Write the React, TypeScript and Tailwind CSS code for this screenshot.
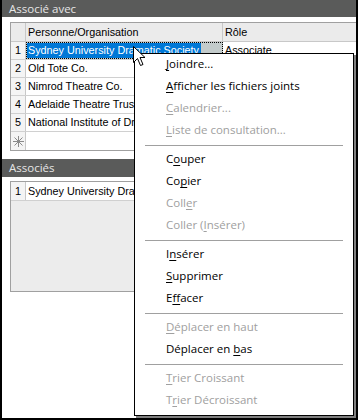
import React from 'react';

type MenuEntry =
  | { sep: true }
  | { sep?: false; pre: string; key: string; post: string; disabled?: boolean };

const menu: MenuEntry[] = [
  { pre: '', key: 'J', post: 'oindre...' },
  { pre: '', key: 'A', post: 'fficher les fichiers joints' },
  { pre: '', key: 'C', post: 'alendrier...', disabled: true },
  { pre: '', key: 'L', post: 'iste de consultation...', disabled: true },
  { sep: true },
  { pre: 'C', key: 'o', post: 'uper' },
  { pre: 'Co', key: 'p', post: 'ier' },
  { pre: 'Coll', key: 'e', post: 'r', disabled: true },
  { pre: 'Coller (', key: 'I', post: 'nsérer)', disabled: true },
  { sep: true },
  { pre: 'I', key: 'n', post: 'sérer' },
  { pre: '', key: 'S', post: 'upprimer' },
  { pre: 'E', key: 'f', post: 'facer' },
  { sep: true },
  { pre: '', key: 'D', post: 'éplacer en haut', disabled: true },
  { pre: 'Déplacer en ', key: 'b', post: 'as' },
  { sep: true },
  { pre: '', key: 'T', post: 'rier Croissant', disabled: true },
  { pre: 'T', key: 'r', post: 'ier Décroissant', disabled: true },
];

const rows = [
  { n: '1', name: 'Sydney University Dramatic Society', role: 'Associate' },
  { n: '2', name: 'Old Tote Co.', role: '' },
  { n: '3', name: 'Nimrod Theatre Co.', role: '' },
  { n: '4', name: 'Adelaide Theatre Trust', role: '' },
  { n: '5', name: 'National Institute of Dramatic Art', role: '' },
];

const grid = "font-['Liberation_Sans',Arial,sans-serif] text-[10.8px] text-black";

function Star() {
  return (
    <svg width="11" height="11" viewBox="0 0 11 11" stroke="#8a8a8a" strokeWidth="1">
      <line x1="5.5" y1="0" x2="5.5" y2="11" />
      <line x1="0" y1="5.5" x2="11" y2="5.5" />
      <line x1="1.5" y1="1.5" x2="9.5" y2="9.5" />
      <line x1="9.5" y1="1.5" x2="1.5" y2="9.5" />
    </svg>
  );
}

function Cursor() {
  return (
    <svg width="13" height="21" viewBox="0 0 13 21" className="absolute left-[131px] top-[46px]">
      <path d="M0.5 0.5 L0.5 16.5 L4.5 12.5 L7.5 19.5 L10 18.5 L7 11.5 L12 11.5 Z" fill="white" stroke="black" strokeWidth="1" />
    </svg>
  );
}

function Bar({ label, tall }: { label: string; tall?: boolean }) {
  return (
    <div className={`${tall ? 'h-[18px]' : 'h-[17px]'} bg-[#5a5b5a] text-[#e6e6e6] pl-[7px] flex items-center font-['Open_Sans',sans-serif] text-[11.5px] leading-none`}>
      {label}
    </div>
  );
}

export default function App() {
  return (
    <div className="relative w-[358px] h-[420px] bg-white border-x-2 border-b-2 border-black overflow-hidden">
      <Bar label="Associé avec" />

      <div className={`mt-[5px] ml-[8px] border-l border-t border-b border-[#a0a0a0] ${grid}`}>
        <div className="flex h-[19px] bg-[#ebebeb] border-b border-[#c8c8c8]">
          <div className="w-[15px] border-r border-[#c8c8c8]" />
          <div className="w-[197px] border-r border-[#c8c8c8] pl-[2px] pt-[1px] flex items-center">Personne/Organisation</div>
          <div className="flex-1 pl-[2px] pt-[1px] flex items-center">Rôle</div>
        </div>
        {rows.map((r, i) => (
          <div key={r.n} className="flex h-[18px] border-b border-[#d0d0d0]">
            <div className="w-[15px] border-r border-[#c8c8c8] bg-[#f4f4f4] flex items-center justify-center">{r.n}</div>
            {i === 0 ? (
              <div className="w-[197px] bg-[#c3cbcb] border border-dotted border-black flex items-center">
                <span className="bg-[#0078d7] text-white h-full flex items-center pl-[1px] pr-[2px] whitespace-nowrap">{r.name}</span>
              </div>
            ) : (
              <div className="w-[197px] border-r border-[#c8c8c8] pl-[2px] flex items-center whitespace-nowrap overflow-hidden">{r.name}</div>
            )}
            <div className="flex-1 pl-[2px] flex items-center">{r.role}</div>
          </div>
        ))}
        <div className="flex h-[18px]">
          <div className="w-[15px] border-r border-[#c8c8c8] bg-[#f4f4f4] flex items-center justify-center"><Star /></div>
          <div className="flex-1" />
        </div>
      </div>

      <div className="h-[8px]" />
      <Bar label="Associés" tall />

      <div className={`mt-[4px] ml-[8px] h-[111px] border-l border-t border-b border-[#a0a0a0] bg-[#ececec] ${grid}`}>
        <div className="flex h-[19px] bg-white border-b border-[#d0d0d0]">
          <div className="w-[15px] border-r border-[#c8c8c8] bg-[#f4f4f4] flex items-center justify-center">1</div>
          <div className="flex-1 pl-[2px] flex items-center whitespace-nowrap">Sydney University Dramatic Society</div>
        </div>
      </div>

      <div className="absolute left-[132px] top-[53px] w-[220px] bg-white border border-black shadow-[2px_2px_0_0_#808080] pb-[3px] font-['Open_Sans',sans-serif] text-[11.5px]">
        {menu.map((m, i) =>
          m.sep ? (
            <div key={i} className="h-[7px] flex items-center px-[10px]">
              <div className="h-px w-full bg-[#a0a0a0]" />
            </div>
          ) : (
            <div key={i} className={`h-[22px] flex items-center pl-[31px] pb-[2px] whitespace-nowrap ${m.disabled ? 'text-[#a0a0a0]' : 'text-black'}`}>
              <span>
                {m.pre}<span className="underline underline-offset-2">{m.key}</span>{m.post}
              </span>
            </div>
          )
        )}
      </div>

      <Cursor />
    </div>
  );
}
